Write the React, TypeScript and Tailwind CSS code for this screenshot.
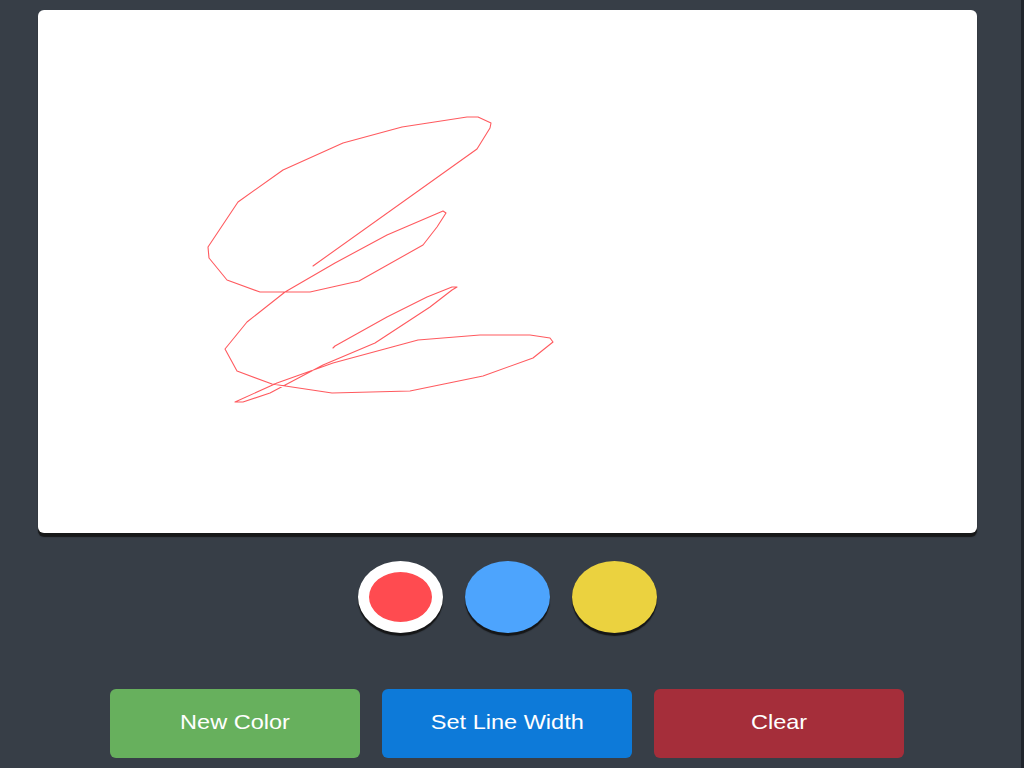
import { useState } from "react";

const STROKE = [
  [313, 266], [477, 149], [490, 128], [491, 123], [478, 117], [467, 117],
  [402, 127], [343, 143], [283, 170], [238, 202], [208, 247], [209, 258],
  [227, 280], [260, 292], [310, 292], [359, 281], [423, 245], [437, 227],
  [446, 213], [443, 211], [387, 235], [335, 263], [285, 292], [247, 322],
  [225, 349], [237, 371], [272, 384], [332, 393], [410, 391], [483, 376],
  [533, 358], [553, 342], [550, 338], [530, 335], [480, 335], [418, 340],
  [333, 363], [277, 383], [235, 402], [243, 402], [270, 393], [323, 365],
  [375, 343], [430, 307], [452, 290], [457, 287], [452, 287], [427, 297],
  [387, 317], [335, 346], [333, 348],
];

const COLORS = [
  { name: "red", className: "bg-[#ff4b50]" },
  { name: "blue", className: "bg-[#4da4fd]" },
  { name: "yellow", className: "bg-[#ebd23f]" },
];

const BUTTONS = [
  { label: "New Color", className: "bg-[#67b05d]" },
  { label: "Set Line Width", className: "bg-[#0d7ad9]" },
  { label: "Clear", className: "bg-[#a52e3a]" },
];

export default function App() {
  const [active, setActive] = useState("red");
  const points = STROKE.map(([x, y]) => `${x - 38},${y - 10}`).join(" ");

  return (
    <div className="flex min-h-[768px] w-full bg-[#373e47] font-['Liberation_Sans',Arial,sans-serif]">
      <main className="flex w-[1014px] flex-col items-center pt-[10px]">
        <div className="h-[523px] w-[939px] rounded-[6px] bg-white shadow-[0_4px_1px_rgba(20,20,20,0.9)]">
          <svg width="939" height="523" viewBox="0 0 939 523">
            <polyline
              points={points}
              fill="none"
              stroke="#ff5a5f"
              strokeWidth="1.1"
              strokeLinejoin="round"
              strokeLinecap="round"
            />
          </svg>
        </div>

        <div className="mt-[28px] flex gap-[22px]">
          {COLORS.map((c) => (
            <button
              key={c.name}
              onClick={() => setActive(c.name)}
              className={`h-[72px] w-[85px] rounded-[50%] shadow-[0_3px_1px_rgba(15,15,15,0.85)] ${c.className} ${
                active === c.name ? "border-[11px] border-white" : ""
              }`}
            />
          ))}
        </div>

        <div className="mt-[56px] flex gap-[22px]">
          {BUTTONS.map((b) => (
            <button
              key={b.label}
              className={`flex h-[69px] w-[250px] items-center justify-center rounded-[6px] pb-[3px] text-[21px] text-white ${b.className}`}
            >
              <span className="inline-block scale-x-[1.12]">{b.label}</span>
            </button>
          ))}
        </div>
      </main>
      <div className="flex-1" />
      <div className="w-[3px] bg-[#20252c]" />
    </div>
  );
}
